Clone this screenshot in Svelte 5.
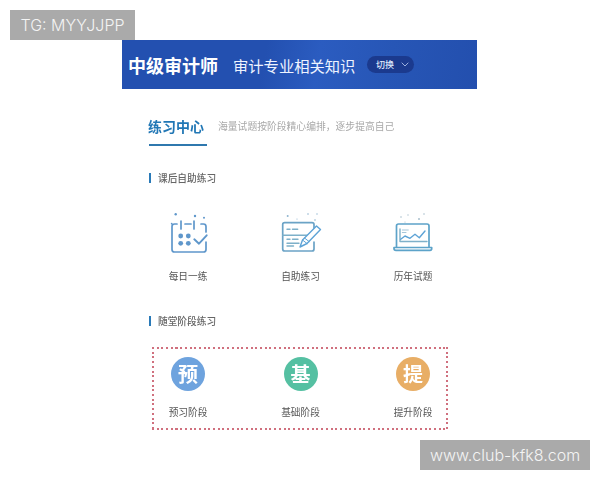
<script>
	const practice = [
		{ key: 'daily', label: '每日一练' },
		{ key: 'self', label: '自助练习' },
		{ key: 'past', label: '历年试题' }
	];
	const stages = [
		{ glyph: '预', label: '预习阶段', color: '#6ea3de' },
		{ glyph: '基', label: '基础阶段', color: '#55c0a2' },
		{ glyph: '提', label: '提升阶段', color: '#e8ae66' }
	];
</script>

<div class="page">
	<main class="card">
		<header class="banner">
			<span class="title">中级审计师</span>
			<span class="subject">审计专业相关知识</span>
			<button class="switch">
				切换
				<svg width="8" height="5" viewBox="0 0 8 5"><path d="M.7.7 4 4 7.3.7" fill="none" stroke="#a9bde8" stroke-width=".9" /></svg>
			</button>
		</header>

		<div class="tabs">
			<h1 class="tab">练习中心</h1>
			<p class="hint">海量试题按阶段精心编排，逐步提高自己</p>
		</div>

		<h2 class="section">课后自助练习</h2>
		<div class="grid">
			{#each practice as item}
				<div class="item">
					<svg class="icon" width="44" height="44" viewBox="0 0 44 44" fill="none" stroke="#5f97cb" stroke-width="1.700" stroke-linecap="round" stroke-linejoin="round">
						{#if item.key === 'daily'}
							<path d="M11 13H8.500Q6 13 6 15.500V38.500Q6 41 8.500 41H37.500Q40 41 40 38.500V31M40 21V15.500Q40 13 37.500 13H35M19 13H25" />
							<path d="M15 10V18M28 10V18" />
							<path d="M28.300 28.300 33 32.700 40.700 24.300" stroke-width="1.900" />
							<g fill="#5f97cb" stroke="none">
								<circle cx="14.700" cy="25" r="2.400" /><circle cx="22.300" cy="25" r="2.400" />
								<circle cx="14.700" cy="32.300" r="2.400" /><circle cx="22.300" cy="32.300" r="2.400" />
								<circle cx="9.700" cy="3.300" r="1.200" /><circle cx="29" cy="5" r="1.200" />
								<circle cx="38" cy="6.700" r="1" /><circle cx="5.700" cy="12.700" r=".9" />
							</g>
						{:else if item.key === 'self'}
							<path d="M35 22V13.500Q35 11.700 33 11.700H5.700Q3.700 11.700 3.700 13.500V38Q3.700 40 5.700 40H33Q35 40 35 38V31" stroke="#6ba3c6" />
							<path d="M3.700 24.300H29M8 18.300H11M13.500 18.300H18.700M8 28.300H11M13.500 28.300H19M8 32.300H20M8 35H14.500" stroke="#7db0c9" stroke-width="1.400" />
							<path d="M21 36 23.500 29 37.500 15 41.500 18.500 28 32.500Z" stroke="#5da3d6" stroke-width="1.400" fill="#fff" />
							<path d="M23.500 29 28 32.500M25.500 27 30 30.500" stroke="#5da3d6" stroke-width="1" />
							<g fill="#8fb5d0" stroke="none">
								<circle cx="8.700" cy="5" r="1" /><circle cx="29" cy="3" r=".8" /><circle cx="38" cy="3" r=".7" /><circle cx="18" cy="8" r=".6" /><circle cx="36" cy="9" r=".8" />
							</g>
						{:else}
							<path d="M5.500 36V15Q5.500 13 7.500 13H36Q38 13 38 15V36" stroke="#5da3c9" />
							<path d="M3 36.500H40.700V37.500Q40.700 39.300 39 39.300H5Q3 39.300 3 37.500Z" stroke="#5da3c9" />
							<path d="M9 18V30.500H36" stroke="#7db0c9" stroke-width="1.400" />
							<path d="M9.700 28.300 14 25 19 27.300 24 23.300 28.300 26.700 34 20" stroke="#5da3d6" stroke-width="1.400" />
							<path d="M11.300 19H17.300M11.300 21.500H15" stroke="#a5c6da" stroke-width="1" />
							<g fill="#a9bfcc" stroke="none">
								<circle cx="10" cy="6" r=".8" /><circle cx="17" cy="4" r=".7" /><circle cx="28" cy="8" r="1" /><circle cx="33" cy="3" r=".8" /><circle cx="14" cy="11" r=".6" />
							</g>
						{/if}
					</svg>
					<span class="label">{item.label}</span>
				</div>
			{/each}
		</div>

		<h2 class="section second">随堂阶段练习</h2>
		<div class="panel">
			{#each stages as stage}
				<div class="item">
					<span class="circle" style="background: {stage.color}">{stage.glyph}</span>
					<span class="label stage">{stage.label}</span>
				</div>
			{/each}
		</div>
	</main>

	<div class="mark top">TG: MYYJJPP</div>
	<div class="mark bottom">www.club-kfk8.com</div>
</div>

<style>
	:global(body) {
		background: #fff;
	}

	.page {
		position: relative;
		width: 600px;
		height: 480px;
		padding-top: 40px;
		box-sizing: border-box;
		overflow: hidden;
		font-family: "Noto Sans CJK SC", "Liberation Sans", sans-serif;
	}

	.card {
		width: 355px;
		margin-left: 122px;
		filter: blur(.3px);
	}

	.banner {
		display: flex;
		align-items: center;
		height: 49px;
		padding-left: 6px;
		box-sizing: border-box;
		color: #fff;
		background: linear-gradient(100deg, #2350b0 0%, #2350b0 40%, #2b5cc0 55%, #2756b6 75%, #234fae 100%);
	}
	.title {
		font-size: 18px;
		font-weight: 700;
		width: 105px;
	}
	.subject {
		font-size: 15.3px;
		color: #eef3ff;
		width: 134px;
	}
	.switch {
		display: flex;
		align-items: center;
		gap: 7px;
		height: 17px;
		width: 47px;
		padding: 0 0 0 9px;
		box-sizing: border-box;
		border: 0;
		border-radius: 9px;
		background: #1b3a8e;
		color: #dfe7fb;
		font: 500 9px "Noto Sans CJK SC", sans-serif;
	}

	.tabs {
		display: flex;
		align-items: center;
		margin: 27px 0 0 27px;
	}
	.tab {
		margin: 0;
		width: 58px;
		height: 30px;
		box-sizing: border-box;
		border-bottom: 2px solid #2f78ae;
		font-size: 14px;
		line-height: 20px;
		font-weight: 700;
		color: #2177b5;
		text-indent: -1px;
	}
	.hint {
		margin: -10px 0 0 11px;
		font-size: 9.8px;
		line-height: 20px;
		color: #a9a9a9;
	}

	.section {
		margin: 27px 0 0 27px;
		padding-left: 7px;
		height: 10px;
		border-left: 2px solid #2a7ab8;
		font-size: 9.7px;
		line-height: 10px;
		font-weight: 500;
		color: #666;
	}
	.section.second {
		margin-top: 32px;
	}

	.grid,
	.panel {
		display: grid;
		grid-template-columns: repeat(3, 70px);
		column-gap: 42.500px;
	}
	.grid {
		margin: 28px 0 0 31px;
	}
	.panel {
		--dots-x: repeating-linear-gradient(90deg, #d0707e 0 2px, transparent 2px 4.700px);
		--dots-y: repeating-linear-gradient(180deg, #d0707e 0 2px, transparent 2px 4.700px);
		margin: 21px 0 0 30px;
		width: 296px;
		height: 83px;
		padding: 10px 0 0 1px;
		box-sizing: border-box;
		background:
			var(--dots-x) top / 100% 2px no-repeat,
			var(--dots-x) bottom / 100% 2px no-repeat,
			var(--dots-y) left / 2px 100% no-repeat,
			var(--dots-y) right / 2px 100% no-repeat;
	}

	.item {
		display: flex;
		flex-direction: column;
		align-items: center;
	}
	.icon {
		display: block;
	}
	.label {
		margin-top: 13px;
		font-size: 9.7px;
		line-height: 16px;
		color: #555;
	}
	.label.stage {
		margin-top: 13px;
	}
	.circle {
		display: flex;
		align-items: center;
		justify-content: center;
		width: 34px;
		height: 34px;
		border-radius: 50%;
		color: #fff;
		font-size: 20px;
		font-weight: 700;
		line-height: 1;
	}

	.mark {
		position: absolute;
		height: 30px;
		background: #aaa;
		color: #f4f4f4;
		font: 300 16px/30px Inter, "Liberation Sans", sans-serif;
		text-align: center;
	}
	.mark.top {
		left: 10px;
		top: 10px;
		width: 125px;
	}
	.mark.bottom {
		left: 420px;
		top: 440px;
		width: 170px;
	}
</style>
